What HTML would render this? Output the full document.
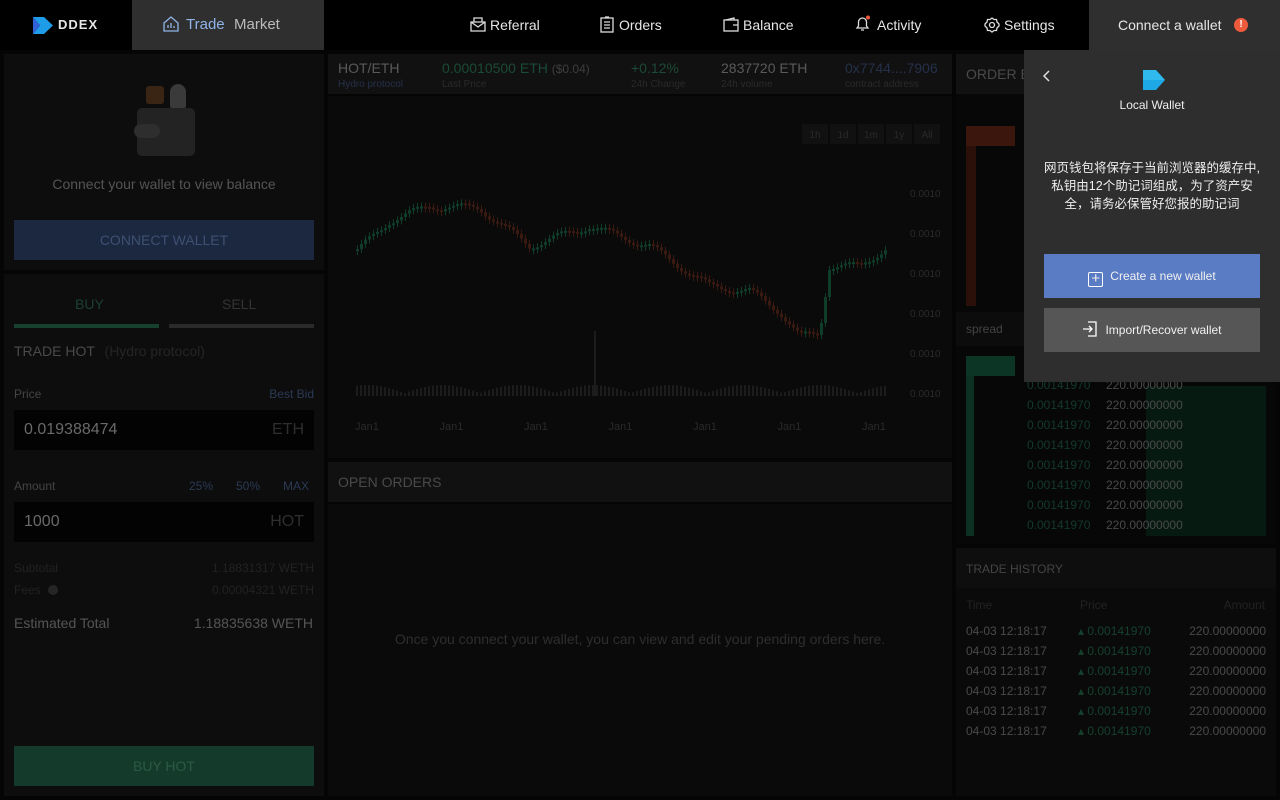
<!DOCTYPE html>
<html><head><meta charset="utf-8"><style>
*{box-sizing:border-box;margin:0;padding:0}
body{width:1280px;height:800px;background:#050505;font-family:"Liberation Sans","Noto Sans CJK SC",sans-serif;position:relative;overflow:hidden;color:#555}
.abs{position:absolute}
.nav{left:0;top:0;width:1280px;height:50px;background:#000}
.nav .it{position:absolute;top:0;height:50px;line-height:50px;color:#e6e6e6;font-size:14px}
.pan{position:absolute;background:#0d0d0d}
.t{position:absolute;white-space:nowrap}
</style></head><body>
<div class="abs nav">
 <svg class="abs" style="left:33px;top:17px" width="20" height="17"><path d="M0 0H11L20 8.5L11 17H0L7 8.5Z" fill="#1e9ce8"/><path d="M0 0L7 8.5L0 17Z" fill="#3160d8"/></svg>
 <div class="it" style="left:58px;font-weight:bold;letter-spacing:1px;font-size:13px">DDEX</div>
 <div class="abs" style="left:132px;top:0;width:192px;height:50px;background:#2f2f2f"></div>
 <svg class="abs" style="left:163px;top:16px" width="16" height="16" fill="none" stroke="#8fb4e8" stroke-width="1.3"><path d="M1 7L8 1L15 7V15H1Z"/><path d="M5 12V9M8 12V7M11 12V10"/></svg>
 <div class="it" style="left:186px;color:#8fb4e8;font-size:15px">Trade</div>
 <div class="it" style="left:234px;color:#bbb;font-size:15px">Market</div>
 <svg class="abs" style="left:470px;top:17px" width="16" height="15" fill="none" stroke="#ddd" stroke-width="1.3"><path d="M1 5H15V14H1Z M1 5L8 10L15 5 M4 5V1H12V5"/></svg>
 <div class="it" style="left:490px">Referral</div>
 <svg class="abs" style="left:600px;top:16px" width="14" height="17" fill="none" stroke="#ddd" stroke-width="1.3"><rect x="1" y="2" width="12" height="14"/><path d="M4 6H10M4 9H10M4 12H10M5 1H9"/></svg>
 <div class="it" style="left:619px">Orders</div>
 <svg class="abs" style="left:723px;top:17px" width="16" height="15" fill="none" stroke="#ddd" stroke-width="1.3"><rect x="1" y="3" width="14" height="11"/><path d="M3 3L11 1V3M10 8H15"/></svg>
 <div class="it" style="left:743px">Balance</div>
 <svg class="abs" style="left:854px;top:15px" width="18" height="18" fill="none" stroke="#ddd" stroke-width="1.3"><path d="M3 13H14L12.5 11V7A4 4 0 0 0 4.5 7V11Z M7 15H10"/><circle cx="14" cy="2.5" r="2" fill="#f05a3a" stroke="none"/></svg>
 <div class="it" style="left:877px">Activity</div>
 <svg class="abs" style="left:984px;top:17px" width="16" height="16" fill="none" stroke="#ddd" stroke-width="1.3"><circle cx="8" cy="8" r="2.5"/><path d="M8 1L10 2.5L12.5 2.5L13 5L15 7V9L13 11L12.5 13.5L10 13.5L8 15L6 13.5L3.5 13.5L3 11L1 9V7L3 5L3.5 2.5L6 2.5Z"/></svg>
 <div class="it" style="left:1004px">Settings</div>
 <div class="abs" style="left:1089px;top:0;width:191px;height:50px;background:#2f2f2f"></div>
 <div class="it" style="left:1118px">Connect a wallet</div>
 <div class="abs" style="left:1234px;top:18px;width:14px;height:14px;border-radius:7px;background:#ee5a3c;color:#fff;font-size:10px;text-align:center;line-height:14px;font-weight:bold">!</div>
</div>

<!-- left -->
<div class="pan" style="left:4px;top:54px;width:320px;height:216px"></div>
<div class="abs" style="left:146px;top:86px;width:18px;height:18px;background:#3a2414;border-radius:3px"></div>
<div class="abs" style="left:170px;top:84px;width:16px;height:24px;background:#3a3a3a;border-radius:8px 8px 2px 2px"></div>
<div class="abs" style="left:137px;top:108px;width:58px;height:48px;background:#232323;border-radius:5px"></div>
<div class="abs" style="left:134px;top:124px;width:26px;height:14px;background:#2e2e2e;border-radius:7px"></div>
<div class="t" style="left:0;width:328px;text-align:center;top:176px;font-size:14px;color:#555">Connect your wallet to view balance</div>
<div class="abs" style="left:14px;top:220px;width:300px;height:40px;background:#1c2740;color:#3e5072;font-size:14px;text-align:center;line-height:40px">CONNECT WALLET</div>

<div class="pan" style="left:4px;top:274px;width:320px;height:522px"></div>
<div class="t" style="left:75px;top:296px;font-size:14px;color:#1c4032">BUY</div>
<div class="t" style="left:222px;top:296px;font-size:14px;color:#333">SELL</div>
<div class="abs" style="left:14px;top:324px;width:145px;height:4px;background:#17402f"></div>
<div class="abs" style="left:169px;top:324px;width:145px;height:4px;background:#2a2a2a"></div>
<div class="t" style="left:14px;top:343px;font-size:14px;color:#4a4a4a">TRADE HOT <span style="color:#252525;margin-left:6px">(Hydro protocol)</span></div>
<div class="t" style="left:14px;top:387px;font-size:12px;color:#444">Price</div>
<div class="t" style="right:966px;top:387px;font-size:12px;color:#2c3a55">Best Bid</div>
<div class="abs" style="left:14px;top:410px;width:300px;height:40px;background:#030303"></div>
<div class="t" style="left:24px;top:421px;font-size:16px;color:#6a6a6a">0.019388474</div>
<div class="t" style="right:976px;top:421px;font-size:16px;color:#2e2e2e">ETH</div>
<div class="t" style="left:14px;top:479px;font-size:12px;color:#444">Amount</div>
<div class="t" style="left:189px;top:479px;font-size:12px;color:#2c3a55">25%</div>
<div class="t" style="left:236px;top:479px;font-size:12px;color:#2c3a55">50%</div>
<div class="t" style="left:283px;top:479px;font-size:12px;color:#2c3a55">MAX</div>
<div class="abs" style="left:14px;top:502px;width:300px;height:40px;background:#030303"></div>
<div class="t" style="left:24px;top:513px;font-size:16px;color:#6a6a6a">1000</div>
<div class="t" style="right:976px;top:513px;font-size:16px;color:#2e2e2e">HOT</div>
<div class="t" style="left:14px;top:561px;font-size:12px;color:#222">Subtotal</div>
<div class="t" style="right:966px;top:561px;font-size:12px;color:#222">1.18831317 WETH</div>
<div class="t" style="left:14px;top:583px;font-size:12px;color:#222">Fees <span style="display:inline-block;width:10px;height:10px;border-radius:5px;background:#252525;vertical-align:-1px;margin-left:4px"></span></div>
<div class="t" style="right:966px;top:583px;font-size:12px;color:#222">0.00004321 WETH</div>
<div class="t" style="left:14px;top:615px;font-size:14px;color:#555">Estimated Total</div>
<div class="t" style="right:967px;top:615px;font-size:14px;color:#555">1.18835638 WETH</div>
<div class="abs" style="left:14px;top:746px;width:300px;height:40px;background:#133a2a;color:#2c5a45;font-size:14px;text-align:center;line-height:40px">BUY HOT</div>

<!-- center -->
<div class="pan" style="left:328px;top:54px;width:624px;height:40px;background:#111"></div>
<div class="t" style="left:338px;top:60px;font-size:14px;color:#5a5a5a">HOT/ETH</div>
<div class="t" style="left:338px;top:79px;font-size:10px;color:#25304a">Hydro protocol</div>
<div class="t" style="left:442px;top:60px;font-size:14px;color:#1b4a36">0.00010500 ETH <span style="color:#3e3e3e;font-size:12px">($0.04)</span></div>
<div class="t" style="left:442px;top:79px;font-size:10px;color:#2a2a2a">Last Price</div>
<div class="t" style="left:631px;top:60px;font-size:14px;color:#1b4a36">+0.12%</div>
<div class="t" style="left:631px;top:79px;font-size:10px;color:#2a2a2a">24h Change</div>
<div class="t" style="left:721px;top:60px;font-size:14px;color:#5a5a5a">2837720 ETH</div>
<div class="t" style="left:721px;top:79px;font-size:10px;color:#2a2a2a">24h volume</div>
<div class="t" style="left:845px;top:60px;font-size:14px;color:#25304a">0x7744....7906</div>
<div class="t" style="left:845px;top:79px;font-size:10px;color:#2a2a2a">contract address</div>
<div class="pan" style="left:328px;top:96px;width:624px;height:362px;background:#0a0a0a"></div>
<svg class="abs" style="left:328px;top:96px" width="624" height="362" id="ch"></svg>
<div class="pan" style="left:328px;top:462px;width:624px;height:40px;background:#111"></div>
<div class="t" style="left:338px;top:474px;font-size:14px;color:#4a4a4a">OPEN ORDERS</div>
<div class="pan" style="left:328px;top:504px;width:624px;height:292px;background:#0a0a0a"></div>
<div class="t" style="left:328px;width:624px;text-align:center;top:631px;font-size:14px;color:#2e2e2e">Once you connect your wallet, you can view and edit your pending orders here.</div>

<!-- right -->
<div class="pan" style="left:956px;top:54px;width:320px;height:490px;background:#070707"></div>
<div class="abs" style="left:956px;top:54px;width:320px;height:40px;background:#111"></div>
<div class="t" style="left:966px;top:66px;font-size:14px;color:#4a4a4a">ORDER B</div>
<div class="abs" style="left:966px;top:126px;width:49px;height:20px;background:#3a160c"></div>
<div class="abs" style="left:966px;top:146px;width:10px;height:160px;background:#2a1008"></div>
<div class="abs" style="left:956px;top:312px;width:320px;height:34px;background:#0c0c0c"></div>
<div class="t" style="left:966px;top:322px;font-size:12px;color:#444">spread</div>
<div class="abs" style="left:966px;top:356px;width:49px;height:20px;background:#0d3526"></div>
<div class="abs" style="left:966px;top:376px;width:8px;height:160px;background:#0c3022"></div>
<div class="abs" style="left:1146px;top:386px;width:120px;height:150px;background:#071a12"></div>
<div id="ob"></div>
<div class="pan" style="left:956px;top:548px;width:320px;height:248px;background:#0a0a0a"></div>
<div class="abs" style="left:956px;top:548px;width:320px;height:40px;background:#0e0e0e"></div>
<div class="t" style="left:966px;top:562px;font-size:12px;color:#444">TRADE HISTORY</div>
<div class="t" style="left:966px;top:598px;font-size:12px;color:#222">Time</div>
<div class="t" style="left:1080px;top:598px;font-size:12px;color:#222">Price</div>
<div class="t" style="right:15px;top:598px;font-size:12px;color:#222">Amount</div>
<div id="th"></div>

<!-- wallet panel -->
<div class="abs" style="left:1024px;top:50px;width:256px;height:332px;background:#2e2e2e"></div>
<svg class="abs" style="left:1042px;top:69px" width="10" height="14" fill="none" stroke="#ddd" stroke-width="1.5"><path d="M7 2L2 7L7 12"/></svg>
<svg class="abs" style="left:1143px;top:70px" width="22" height="20"><path d="M0 0H13L22 10L13 20H0Z" fill="#1ea8e6"/><path d="M0 0H13L22 10H0Z" fill="#3cc4f0" opacity=".6"/></svg>
<div class="t" style="left:1024px;width:256px;text-align:center;top:98px;font-size:12px;color:#eee">Local Wallet</div>
<div class="t" style="left:1024px;width:256px;text-align:center;top:159px;font-size:12.5px;color:#eee;line-height:18px">网页钱包将保存于当前浏览器的缓存中,<br>私钥由12个助记词组成，为了资产安<br>全，请务必保管好您报的助记词</div>
<div class="abs" style="left:1044px;top:254px;width:216px;height:44px;background:#5a7cc4;color:#f0f0f0;font-size:12px;text-align:center;line-height:44px"><span style="display:inline-block;width:15px;height:15px;border:1.3px solid #fff;border-radius:2px;vertical-align:-3px;margin-right:7px;line-height:11px;font-size:15px">+</span>Create a new wallet</div>
<div class="abs" style="left:1044px;top:308px;width:216px;height:44px;background:#565656;color:#f0f0f0;font-size:12px;text-align:center;line-height:44px"><svg width="16" height="16" style="vertical-align:-3px;margin-right:7px" fill="none" stroke="#fff" stroke-width="1.3"><path d="M6 1H14V15H6M1 8H10M7 5L10 8L7 11"/></svg>Import/Recover wallet</div>

<script>
(function(){
var s='',ob='',th='';
for(var i=0;i<8;i++){ob+='<div class="t" style="left:1027px;top:'+(378+i*20)+'px;font-size:12px;color:#133a2a">0.00141970</div><div class="t" style="left:1106px;top:'+(378+i*20)+'px;font-size:12px;color:#4a4a4a">220.00000000</div>';}
for(var i=0;i<6;i++){var y=624+i*20;th+='<div class="t" style="left:966px;top:'+y+'px;font-size:12px;color:#4a4a4a">04-03 12:18:17</div><div class="t" style="left:1078px;top:'+y+'px;font-size:12px;color:#15402e">▴ 0.00141970</div><div class="t" style="right:14px;top:'+y+'px;font-size:12px;color:#4a4a4a">220.00000000</div>';}
document.getElementById('ob').innerHTML=ob;document.getElementById('th').innerHTML=th;
var pts=[[28,155],[60,125],[100,110],[150,112],[200,150],[260,130],[320,150],[350,170],[380,190],[420,195],[450,215],[470,240],[490,238],[500,170],[530,170],[560,150]];
function yAt(x){for(var k=0;k<pts.length-1;k++){if(x<=pts[k+1][0]){var a=pts[k],b=pts[k+1];return a[1]+(b[1]-a[1])*(x-a[0])/(b[0]-a[0]);}}return 150}
var prev=yAt(28);
for(var x=28;x<557;x+=4){var y=yAt(x)+Math.sin(x*1.7)*4;var up=y<prev;var tp=Math.min(y,prev),h=Math.max(2,Math.abs(y-prev));var c=up?'#0f3d2a':'#3a1a10';
s+='<line x1="'+(x+1.5)+'" x2="'+(x+1.5)+'" y1="'+(tp-4)+'" y2="'+(tp+h+4)+'" stroke="'+c+'"/><rect x="'+x+'" y="'+tp+'" width="3" height="'+h+'" fill="'+c+'"/>';
var vh=3+Math.abs(Math.sin(x*3.1))*8;
s+='<rect x="'+x+'" y="'+(300-vh)+'" width="2" height="'+vh+'" fill="#1c1c1c"/>';prev=y;}
s+='<rect x="266" y="235" width="2" height="65" fill="#1c1c1c"/>';
var tf=['1h','1d','1m','1y','All'];for(var i=0;i<5;i++)s+='<rect x="'+(474+i*28)+'" y="28" width="26" height="20" fill="#111"/><text x="'+(487+i*28)+'" y="42" font-size="10" fill="#2a2a2a" text-anchor="middle" font-family="Liberation Sans">'+tf[i]+'</text>';
for(var i=0;i<6;i++)s+='<text x="582" y="'+(101+i*40)+'" font-size="10" fill="#2a2a2a" font-family="Liberation Sans">0.0010</text>';
for(var i=0;i<7;i++)s+='<text x="'+(27+i*84.5)+'" y="334" font-size="11" fill="#2a2a2a" font-family="Liberation Sans">Jan1</text>';
document.getElementById('ch').innerHTML=s;
})();
</script>
</body></html>
